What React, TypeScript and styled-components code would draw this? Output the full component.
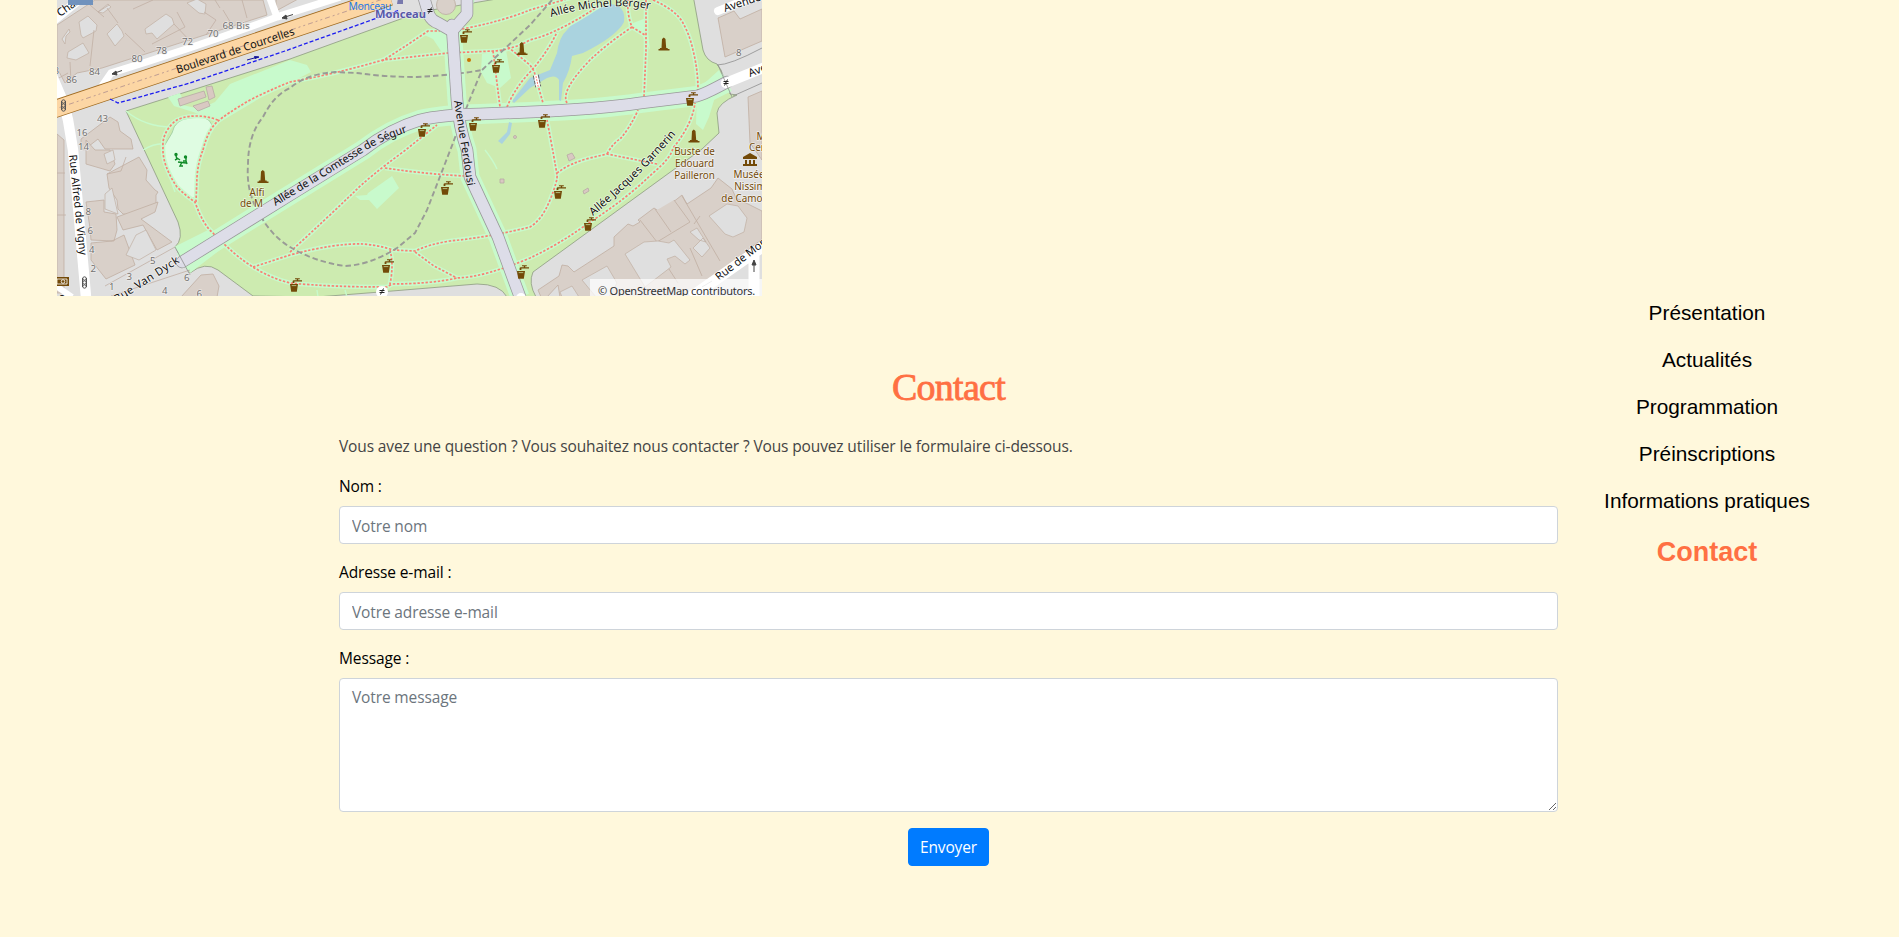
import React from 'react';
import styled, { createGlobalStyle, css } from 'styled-components';

const GlobalStyle = createGlobalStyle`
  *, *::before, *::after { box-sizing: border-box; }
  body {
    margin: 0;
    background: #fff8dc;
    color: #212529;
    font: 400 16px/1.5 "Open Sans", "Noto Sans", sans-serif;
  }
`;

const Page = styled.main`
  min-height: 937px;
  overflow: hidden;
`;

const MapFrame = styled.section`
  position: relative;
  width: 705px;
  height: 296px;
  margin-left: 57px;
  overflow: hidden;
  background: #dfdfdf;
`;

const MapDrawing = styled.svg`
  display: block;
  font-family: "Noto Sans", sans-serif;
`;

const Attribution = styled.div`
  position: absolute;
  right: 0;
  bottom: 0;
  width: 172px;
  height: 17px;
  padding-left: 8px;
  background: rgba(255, 255, 255, 0.7);
  color: #333;
  font: 11px/23px "Noto Sans", sans-serif;
  letter-spacing: -0.24px;
  white-space: nowrap;
`;

const ContactRow = styled.div`
  display: grid;
  grid-template-columns: 1219px 298px;
  margin-left: 339px;
`;

const ContactSection = styled.section`
  padding-top: 70px;
`;

const Title = styled.h2`
  margin: 0 0 25px;
  color: #ff7043;
  font: 400 38px/43px "Liberation Serif", serif;
  letter-spacing: -0.75px;
  text-align: center;
  -webkit-text-stroke: 0.8px #ff7043;
`;

const bodyText = css`
  font-family: "Open Sans", "Noto Sans", sans-serif;
  font-size: 15.5px;
  line-height: 24px;
  letter-spacing: -0.13px;
`;

const Intro = styled.p`
  ${bodyText}
  margin: 0 0 16px;
  color: #444;
`;

const Field = styled.div`
  margin-bottom: 16px;
`;

const Label = styled.label`
  ${bodyText}
  display: block;
  margin-bottom: 8px;
  color: #000;
`;

const control = css`
  ${bodyText}
  display: block;
  width: 100%;
  padding: 7px 12px 5px;
  border: 1px solid #ced4da;
  border-radius: 4px;
  background: #fff;
  color: #495057;
  &::placeholder { color: #6c757d; opacity: 1; }
`;

const Input = styled.input`
  ${control}
  height: 38px;
`;

const TextArea = styled.textarea`
  ${control}
  height: 134px;
  padding-top: 6px;
  resize: vertical;
`;

const Submit = styled.button`
  ${bodyText}
  display: block;
  width: 81px;
  height: 38px;
  margin: 0 auto;
  padding: 0;
  border: 1px solid #007bff;
  border-radius: 4px;
  background: #007bff;
  color: #fff;
`;

const SideNav = styled.nav`
  display: flex;
  flex-direction: column;
  align-items: center;
  gap: 16px;
  padding-top: 1px;
`;

const NavLink = styled.a<{ $active?: boolean }>`
  color: ${(p) => (p.$active ? '#ff7043' : '#000')};
  font-family: "Liberation Sans", Arial, sans-serif;
  font-size: ${(p) => (p.$active ? '27px' : '20.8px')};
  font-weight: ${(p) => (p.$active ? 700 : 400)};
  line-height: ${(p) => (p.$active ? '41px' : '31px')};
  text-decoration: none;
`;

const links = ['Présentation', 'Actualités', 'Programmation', 'Préinscriptions', 'Informations pratiques', 'Contact'];

const footpaths = [
  'M203 150Q208 130 217 122T250 100Q270 90 290 82Q335 74 383 60Q420 56 448 53L493 51Q512 50 530 40Q545 36 557 30Q575 22 600 5',
  'M382 61Q400 50 428 31L440 31',
  'M462 29Q500 22 530 10L570 -2',
  'M493 51L500 107',
  'M507 107Q515 88 530 72Q548 52 557 32',
  'M508 47L530 65L534 71L543 103',
  'M567 103Q560 91 590 60Q608 43 632 27Q627 15 628 0M632 27L645 35',
  'M646 0L646 50L644 97',
  'M653 0Q676 10 683 23T693 50Q698 70 698 90',
  'M218 120Q207 116 197 116Q180 116 173 123Q162 134 163 147Q162 165 177 187Q186 196 195 202Q203 225 213 233Q235 256 253 267Q270 278 290 283Q330 287 387 287L392 284',
  'M196 202L197 177Q198 162 203 150',
  'M253 267L290 255Q335 243 363 244Q378 245 393 250L415 251Q430 244 450 241Q490 237 530 227Q542 220 550 200T557 175Q555 162 547 120',
  'M290 252Q325 220 353 193Q370 176 403 152L437 125',
  'M385 168Q425 174 465 176',
  'M415 252L434 266L457 278',
  'M390 250Q394 265 390 284Q430 284 457 278Q485 277 530 258Q560 244 590 222Q625 200 653 173Q671 158 673 148Q692 125 695 103',
  'M557 173Q570 163 590 158L607 154L657 164',
  'M607 154Q613 143 620 139Q630 128 638 110',
];

const avenues = [
  'M452 25L457 100Q459 127 467 150L470 177L498 237L520 297',
  'M182 262L290 195L363 150Q390 129 420 120Q440 115 480 114L530 112Q600 109 640 103L697 96Q705 94 727 82',
  'M424 -2L429 15Q432 21 438 23L452 31',
  'M467 -2L467 14L452 31',
];

const parkOutline =
  'M126 111L290 59L420 12L520 -5L693 -5L703 50Q706 61 717 64L721 70L730 94L737 95Q718 103 717 113L719 133L702 149L533 272Q528 283 536 297L507 297Q500 284 477 284L380 292L317 297L253 296L218 270Q205 261 190 273L175 247Q184 239 178 222Z';

function Faucet({ x, y }: { x: number; y: number }) {
  return (
    <g transform={`translate(${x} ${y})`} fill="#734a08">
      <path d="M0 6H8L6.8 13.7H1.2Z" />
      <path d="M2.6 5V3.2Q2.6 2.2 4 2.2H6.8V1.2H5V.3H9.8V1.2H8.2V2.2H12V3.6H4.4V5Z" />
      <path d="M1.7 7.6H6.3" stroke="#cdebb0" strokeWidth=".7" />
    </g>
  );
}

function Monument({ x, y }: { x: number; y: number }) {
  return (
    <path
      transform={`translate(${x} ${y})`}
      d="M3.5 1.5L5.3 0L7 1.5L7.7 10.5H9.2V11.5H11V13H0V11.5H1.4V10.5H3Z"
      fill="#734a08"
    />
  );
}

function TrafficLight({ x, y }: { x: number; y: number }) {
  return (
    <g transform={`translate(${x} ${y})`} fill="none" stroke="#555" strokeWidth="1">
      <circle cx="2.5" cy="2.5" r="1.7" />
      <circle cx="2.5" cy="6.5" r="1.7" />
      <circle cx="2.5" cy="10.5" r="1.7" />
      <path d="M.5 2V11M4.5 2V11" />
    </g>
  );
}

const faucets: [number, number][] = [
  [460, 29], [492, 59], [418, 123], [469, 117], [538, 114], [686, 92], [441, 181], [554, 185], [584, 217],
  [382, 259], [290, 278], [517, 265],
];

const houseNumbers: [string, number, number][] = [
  ['68 Bis', 222.5, 29], ['70', 207.5, 36.5], ['72', 182, 44.5], ['78', 156, 53.5], ['80', 131.5, 62], ['84', 89, 75],
  ['86', 66, 83], ['8', 53.5, 74], ['43', 97, 121.5], ['16', 76.5, 136], ['14', 78, 150], ['8', 85.5, 215], ['6', 87.5, 234],
  ['4', 89, 253], ['2', 90.5, 271.5], ['5', 150, 264], ['3', 126.5, 279.5], ['1', 109, 289.5], ['6', 184, 281],
  ['4', 162, 294], ['6', 196.5, 297], ['8', 736, 55.5],
];

function ParkMap() {
  return (
    <MapDrawing width="705" height="296" viewBox="57 0 705 296" role="img" aria-label="Parc Monceau">
      <defs>
        <path id="segur" d="M275.500 206L330 173L361 153.500Q382 140 412 130.500" />
        <path id="garnerin" d="M593 216Q642 175 677 133" />
        <path id="berger" d="M551 17Q606 1 649 9" />
      </defs>
      <rect x="57" width="705" height="296" fill="#dfdfdf" />
      <path d={parkOutline} fill="#cdebb0" stroke="#8d9b80" strokeWidth=".8" />

      {/* lawns */}
      <g fill="#c8facc">
        <path d="M168 97L180 93L183 100L178 104L200 109L215 102L230 84L290 60L307 65L311 72L260 98L220 122L193 112L174 106Z" />
        <path d="M368 193L392 176L399 188L377 209L369 200L360 200L355 196L367 195Z" />
        <path d="M423 14L438 31L420 33L433 39L443 54L448 54L450 30Z" />
        <path d="M482 54L506 50L511 78L500 88L487 83L481 72Z" />
        <path d="M465 0L475 0L460 30Z" />
        <path d="M174 247L210 229L233 240L190 273L183 258Z" />
        <path d="M697 90L719 70L731 92L715 97L709 117L703 130L696 124Z" />
        <path d="M628 25L646 18L650 50L642 35Z" />
      </g>
      <g fill="none" stroke="#c8facc">
        <path d={avenues[0]} strokeWidth="19" />
        <path d={avenues[1]} strokeWidth="20" />
        <path d="M126 111Q145 127 172 127M143 150Q160 140 171 146M165 164L175 192M485 150Q493 160 497 169M317 290L318 297M345 290L347 297" strokeWidth="1.4" />
      </g>
      <path d="M172 133Q175 119 190 118Q208 114 212 125Q210 137 202 148L196 196Q193 202 186 193Q160 176 163 148Z" fill="#dffce2" stroke="#9bc99d" strokeWidth=".8" />

      {/* lake and streams */}
      <g fill="#aad3df">
        <path d="M610 4Q626 5 624 22Q617 36 583 53L572 56Q570 71 563 83L561 101L559 100L559 80Q556 74 547 78L530 88L514 103L512 101L530 78L550 70L557 53Q559 37 567 30Q580 14 593 10Z" />
        <path d="M509 122L512 123L510 134L502 144L498 141L507 132Z" />
      </g>

      {/* paths */}
      <g fill="none" strokeLinejoin="round">
        {footpaths.map((d) => <path key={d} d={d} stroke="#c8facc" strokeWidth="4.6" />)}
        {footpaths.map((d) => <path key={d} d={d} stroke="#fa8072" strokeWidth="1.7" strokeDasharray="2.4 1.7" />)}
        <g stroke="#999b96" strokeWidth="1.9" strokeDasharray="5.500 3">
          <path d="M552 0L530 25L482 70Q465 110 453 143L427 210L415 233L397 248Q370 265 345 266Q315 262 290 247Q270 235 258 211Q246 191 248 165Q248 135 263 117Q274 95 290 88Q306 74 335 72L357 73Q385 77 417 77Q455 75 482 70" />
        </g>
        {avenues.map((d) => <path key={d} d={d} stroke="#999" strokeWidth="12.5" strokeLinecap="round" />)}
        {avenues.map((d) => <path key={d} d={d} stroke="#dddde8" strokeWidth="11" strokeLinecap="round" />)}
      </g>
      <circle cx="446" cy="5" r="9.5" fill="#d9d0c9" stroke="#c2b5a9" />

      {/* buildings */}
      <g fill="#d9d0c9" stroke="#c0afa2" strokeWidth=".8">
        <path d="M57 25L95 0H263L267 15L102 68L77 73L65 83L57 68Z" />
        <path d="M81 139L110 117L118 122L120 131L131 139L133 149L105 149L98 139L84 150L81 148Z" />
        <path d="M57 134L64 140V293H57Z" />
        <path d="M86 140L95 150L110 150L115 164L110 171L86 164ZM107 174L139 157L147 170L146 180L155 190L158 192L156 195L156 206L135 215L123 214L118 209L117 200L109 188Z" />
        <path d="M86 202L104 200V212L116 214L117 230L114 241L91 240L90 228ZM91 243L112 241L124 235L135 265L106 279L91 260Z" />
        <path d="M117 217L158 202L155 212L141 219L172 242L157 250L143 225L123 230Z" />
        <path d="M181 297L201 275L213 274L219 286L217 297Z" />
        <path d="M718 18L734 11L740 19L762 9V41L725 57Z" />
        <path d="M748 97L762 91V160L750 143Z" />
        <path d="M538 290L559 276L562 265L568 266L574 272L614 246L614 237L628 224L633 226L640 222L638 220L654 208L660 212L677 199L682 195L687 204L711 188L718 178L732 189L736 198L762 211V239L689 297H560L558 285L547 297H541Z" />
        <path d="M640 220L657 242L690 222L674 200M655 209L671 232M682 196L720 261M700 216L694 224M667 266L678 283M690 248L702 276" />
        <path d="M276 0L292 -8H311L276 11Z" />
      </g>
      <g fill="#dfdfdf" stroke="#c0afa2" strokeWidth=".7">
        <path d="M145 29L166 14L172 18L174 24L157 39L152 33L146 34Z" />
        <path d="M107 34L117 24L122 31L124 36L115 46Z" />
        <path d="M68 52L83 43L89 53L76 60L67 58Z" />
        <path d="M79 22L88 16L97 25L96 31L83 38L81 35Z" />
        <path d="M187 3L197 -1L206 4L205 14L199 13Z" />
        <path d="M62 39L69 29L70 32L66 36L65 44ZM98 12L108 4L111 7L103 13Z" />
        <path d="M104 154L113 150L115 160L107 164ZM105 194L112 188L118 214L105 209Z" />
        <path d="M126 255L136 235L146 230L156 250L139 260Z" />
        <path d="M709 216L727 204L738 206L747 218L744 232L733 237L725 234Z" />
        <path d="M625 254L644 242L658 241L669 243L674 240L690 260L685 264L675 256L667 259L671 267L645 287Z" />
        <path d="M690 232L697 228L706 242L699 240ZM693 248L703 238L710 248L702 257Z" />
        <path d="M582 280L607 266L617 283L609 297H596ZM560 292L572 286L579 297H562Z" />
      </g>
      <path d="M70 62L71 82M57 79L68 73M118 23L107 8M94 30L90 66M90 5L104 17M98 12L109 5M133 9L153 0M152 44L185 27L177 12M145 52L125 33M206 35L216 20L204 12M174 24L191 42M223 10L232 25M242 0L247 18M215 0L220 8M107 174L121 171L126 157M57 173H65M57 215H66M105 286L175 247M111 296L190 270" fill="none" stroke="#c1b0a4" strokeWidth=".8" />
      <g fill="#d9c9c2" stroke="#b8aaa5" strokeWidth=".8">
        <path d="M178 99L204 91L206 97L180 106ZM206 87L212 86L215 97L209 100ZM193 106L208 101L210 106L198 111Z" />
        <path d="M567 155L572 153L575 158L569 161ZM583 191L588 188L589 191L584 194ZM500 179H504V183H500Z" />
        <circle cx="515" cy="137" r="1.5" />
      </g>

      {/* roads */}
      <g fill="none" stroke="#fff">
        <path d="M53 21L85 -5" strokeWidth="9" />
        <path d="M52 76L64 104L68 120L73 150L86 297" strokeWidth="10.5" />
        <path d="M102 86L111 73Q200 46 277 17L340 -3M270 -2L277 17" strokeWidth="7.2" />
        <path d="M718 11L765 -8" strokeWidth="8" strokeLinecap="round" />
        <path d="M726 83L768 66" strokeWidth="10.5" strokeLinecap="round" />
        <path d="M691 297L768 243M754 251L754 297" strokeWidth="11" />
        <circle cx="382" cy="292" r="6" fill="#fff" stroke="none" />
        <circle cx="521" cy="298" r="5" fill="#fff" stroke="none" />
        <path d="M53 284L72 297" strokeWidth="6" />
      </g>
      <path d="M52 110L390 -3.3" stroke="#a06b20" strokeWidth="18" />
      <path d="M52 110L390 -3.3" stroke="#fcd6a4" strokeWidth="16.3" />
      <path d="M52 110L390 -3.3" stroke="#bf9d92" strokeWidth="1" strokeDasharray="5 3 2 3 2 3" />
      <path d="M110 99L118 103L190 83L285 51L380 17L400 10" fill="none" stroke="#1d1df0" strokeWidth="1.3" strokeDasharray="4 2" />
      <path d="M247 60L258 57M259 57L255 58.500L254.500 56.500Z" fill="#14149a" stroke="#14149a" />
      <g stroke="#444" strokeWidth="1" fill="#444">
        <path d="M112 74L122 70.5M112 74L116 71L117 75ZM282 18L293 14.5M282 18L286 15L287 19Z" />
        <path d="M754 272V262M754 260L752 265H756Z" />
      </g>
      <path d="M702 287L712 281" stroke="#c6c6c6" />
      <path d="M717 65Q730 65 762 48M718 65L732 97M733 96L762 83M175 247L190 275" fill="none" stroke="#8e8e8e" strokeWidth=".8" />
      <g transform="translate(537 81) rotate(-12)">
        <rect x="-2.5" y="-6" width="5" height="12" fill="#fff" />
        <path d="M-2.5 -6V6M2.5 -6V6" stroke="#666" strokeWidth="1" strokeDasharray="4 1" />
        <path d="M0 -5V6" stroke="#fa8072" strokeDasharray="2 1" />
      </g>

      {/* points of interest */}
      {faucets.map(([x, y]) => <Faucet key={`${x}-${y}`} x={x} y={y} />)}
      <Monument x={516.5} y={42} />
      <Monument x={658.5} y={37.5} />
      <Monument x={688.5} y={129.5} />
      <Monument x={257.5} y={170} />
      <circle cx="469" cy="60" r="2" fill="#c77400" />
      <TrafficLight x={61} y={99} />
      <TrafficLight x={82} y={276} />
      <path d="M743 157L750 153L757 157V159H743ZM745 160H747V164H745ZM749 160H751V164H749ZM753 160H755V164H753ZM743 164H757V166H743Z" fill="#734a08" />
      <g fill="none" stroke="#108a27" strokeWidth="1.4">
        <path d="M176 156L177 159L175 160M177 158L180 160M186 158L186 161L183 161M186 161L187 164M178 162L186 163" />
        <circle cx="176" cy="154.5" r="1" fill="#108a27" />
        <circle cx="185.500" cy="157" r="1" fill="#108a27" />
        <path d="M182 162L180 166H183" />
      </g>
      <g>
        <rect x="56" y="277" width="13" height="9" fill="#734a08" />
        <path d="M57 279H67V284H57Z" fill="none" stroke="#fff" strokeWidth=".8" />
        <circle cx="63" cy="281.5" r="1.8" fill="#734a08" stroke="#fff" strokeWidth=".8" />
      </g>
      <path d="M398 -2H403V4H397Z" fill="#7879ad" />
      <g fill="none" stroke="#222" strokeWidth="1">
        <path d="M427.500 9.500H432.500M427.500 11.500H432.500M431.500 7.500L428.500 13.500M723.500 81.500H728.500M723.500 83.500H728.500M727.500 79.500L724.500 85.500M379.500 290.500H384.500M379.500 292.500H384.500M383.500 288.500L380.500 294.500" />
      </g>

      {/* labels */}
      <g fontSize="9.7" fill="#707070" stroke="#f0eeec" strokeWidth="1.2" paintOrder="stroke">
        {houseNumbers.map(([n, x, y]) => <text key={`${n}-${x}`} x={x} y={y}>{n}</text>)}
      </g>
      <g fill="#111" fontSize="11" stroke="#fff" strokeOpacity=".6" strokeWidth="1.5" paintOrder="stroke">
        <text transform="translate(177.5 73.5) rotate(-18.3)" textLength="124" stroke="none">Boulevard de Courcelles</text>
        <text transform="translate(60 17) rotate(-35)" textLength="25">Chaz</text>
        <text transform="translate(69 155) rotate(84)" textLength="101">Rue Alfred de Vigny</text>
        <text transform="translate(117 303) rotate(-33)" textLength="75">Rue Van Dyck</text>
        <text stroke="none" letterSpacing="-.15"><textPath href="#segur">Allée de la Comtesse de Ségur</textPath></text>
        <text transform="translate(454 101) rotate(81)" textLength="86" stroke="none">Avenue Ferdousi</text>
        <text><textPath href="#berger">Allée Michel Berger</textPath></text>
        <text><textPath href="#garnerin">Allée Jacques Garnerin</textPath></text>
        <text transform="translate(725 12) rotate(-18)">Avenue</text>
        <text transform="translate(750 77) rotate(-21)">Avenue</text>
        <text transform="translate(719 281) rotate(-38)">Rue de Monceau</text>
      </g>
      <text x="59" y="301" fontSize="10">o</text>
      <text x="348.5" y="10" fontSize="10.4" fill="#257ae8" textLength="43">Monceau</text>
      <text x="375" y="18" fontSize="10.6" fontWeight="700" fill="#5859a5" stroke="#eef" strokeWidth="1" paintOrder="stroke" textLength="51" lengthAdjust="spacingAndGlyphs">Monceau</text>
      <g fontSize="9.9" fill="#734a08" textAnchor="middle" stroke="#fff" strokeOpacity=".6" strokeWidth="1.4" paintOrder="stroke">
        <text x="257" y="196">Alfi</text>
        <text x="251.5" y="207">de M</text>
        <text x="694.5" y="155">Buste de</text>
        <text x="694.5" y="167">Edouard</text>
        <text x="694.5" y="179">Pailleron</text>
        <text x="761" y="140">M</text>
        <text x="757" y="151">Cer</text>
        <text x="749" y="178">Musée</text>
        <text x="750" y="190">Nissim</text>
        <text x="745" y="202">de Camon</text>
      </g>
      <rect x="68" y="0" width="25" height="5" fill="#7092bd" />
    </MapDrawing>
  );
}

export default function App() {
  return (
    <>
      <GlobalStyle />
      <Page>
        <MapFrame>
          <ParkMap />
          <Attribution>© OpenStreetMap contributors.</Attribution>
        </MapFrame>
        <ContactRow>
          <ContactSection>
            <Title>Contact</Title>
            <Intro>
              Vous avez une question ? Vous souhaitez nous contacter ? Vous pouvez utiliser le formulaire ci-dessous.
            </Intro>
            <form onSubmit={(e) => e.preventDefault()}>
              <Field>
                <Label htmlFor="nom">Nom :</Label>
                <Input id="nom" placeholder="Votre nom" />
              </Field>
              <Field>
                <Label htmlFor="email">Adresse e-mail :</Label>
                <Input id="email" type="email" placeholder="Votre adresse e-mail" />
              </Field>
              <Field>
                <Label htmlFor="message">Message :</Label>
                <TextArea id="message" placeholder="Votre message" />
              </Field>
              <Submit type="submit">Envoyer</Submit>
            </form>
          </ContactSection>
          <SideNav>
            {links.map((label) => (
              <NavLink key={label} $active={label === 'Contact'}>{label}</NavLink>
            ))}
          </SideNav>
        </ContactRow>
      </Page>
    </>
  );
}
